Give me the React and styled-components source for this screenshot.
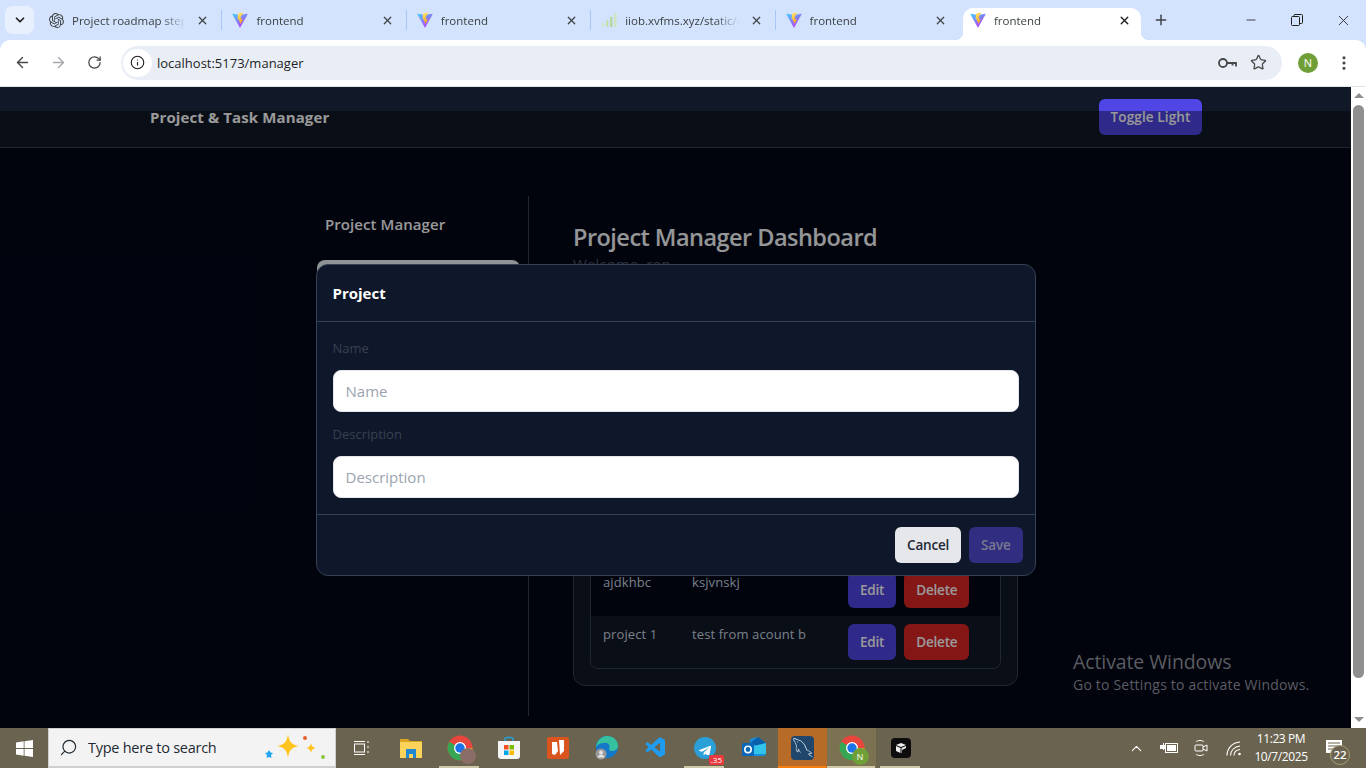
import React from 'react';
import styled, { createGlobalStyle } from 'styled-components';
import {
  ArrowLeft, ArrowRight, RotateCw, Info, Star, MoreVertical, X, Plus, Minus,
  ChevronDown, ChevronUp, Search,
} from 'lucide-react';
import { SiOpenai } from 'react-icons/si';
import { VscVscode } from 'react-icons/vsc';
import { FaTelegramPlane } from 'react-icons/fa';
import { GrMysql } from 'react-icons/gr';

const UI = `"Open Sans", "Noto Sans", "Liberation Sans", sans-serif`;

const GlobalStyle = createGlobalStyle`
  html, body { margin: 0; padding: 0; overflow: hidden; background: #fff; }
  * { box-sizing: border-box; }
  body { font-family: ${UI}; }
`;

const Screen = styled.div`
  position: relative;
  width: 1366px;
  height: 768px;
  display: flex;
  flex-direction: column;
  overflow: hidden;
`;

/* browser chrome */
const TabStrip = styled.div`
  height: 40px;
  flex: none;
  background: #d3e3fd;
  display: flex;
  align-items: flex-end;
  padding-left: 5px;
`;
const TabSearch = styled.div`
  width: 29px;
  height: 28px;
  margin-bottom: 6px;
  margin-right: 4px;
  border-radius: 8px;
  background: #e8f0fe;
  display: flex;
  align-items: center;
  justify-content: center;
  color: #1f1f1f;
`;
const Tab = styled.div`
  position: relative;
  width: ${p => (p.$active ? '178px' : '184.4px')};
  margin-left: ${p => (p.$active ? '3px' : '0')};
  height: 32px;
  display: flex;
  align-items: center;
  padding: 0 ${p => (p.$active ? '7px' : '10px')} 8px ${p => (p.$active ? '7px' : '10px')};
  border-radius: 10px 10px 0 0;
  background: ${p => (p.$active ? '#fff' : 'transparent')};
  font-size: 11.5px;
  color: #3c4043;
  &::after {
    content: '';
    display: ${p => (p.$last || p.$active ? 'none' : 'block')};
    position: absolute;
    right: 0;
    top: 2px;
    width: 1px;
    height: 20px;
    background: #a8c7fa;
  }
  ${p => p.$active && `
    &::before {
      content: '';
      position: absolute;
      left: -8px;
      bottom: 0;
      width: 8px;
      height: 8px;
      background: radial-gradient(circle at 0 0, transparent 8px, #fff 8.5px);
    }
  `}
`;
const TabFlare = styled.span`
  position: absolute;
  right: -8px;
  bottom: 0;
  width: 8px;
  height: 8px;
  background: radial-gradient(circle at 100% 0, transparent 8px, #fff 8.5px);
`;
const TabIcon = styled.span`
  width: 16px;
  height: 16px;
  flex: none;
  display: flex;
  align-items: center;
  justify-content: center;
`;
const TabTitle = styled.span`
  flex: 1;
  margin: 0 10px 0 8px;
  white-space: nowrap;
  overflow: hidden;
  mask-image: linear-gradient(to right, #000 78%, transparent 100%);
`;
const TabClose = styled(X)`
  flex: none;
  margin-right: 3px;
  color: #3c4043;
`;
const NewTab = styled.div`
  width: 24px;
  height: 32px;
  margin-left: 8px;
  padding-bottom: 8px;
  display: flex;
  align-items: center;
  justify-content: center;
  color: #3c4043;
`;
const WindowButtons = styled.div`
  margin-left: auto;
  height: 40px;
  display: flex;
  align-items: center;
  color: #1f1f1f;
`;
const WindowButton = styled.div`
  width: 46px;
  display: flex;
  justify-content: center;
`;
const Toolbar = styled.div`
  height: 47px;
  flex: none;
  background: #d3e3fd;
`;
const ToolbarInner = styled.div`
  height: 47px;
  background: #fff;
  border-radius: 10px 10px 0 0;
  border-bottom: 1px solid #e1e3e6;
  display: flex;
  align-items: center;
  padding: 0 0 1px 12px;
  color: #474747;
`;
const NavButton = styled.div`
  width: 20px;
  margin-right: 16px;
  display: flex;
  justify-content: center;
  color: ${p => (p.$muted ? '#a6a8ab' : '#474747')};
`;
const AddressBar = styled.div`
  width: 1161px;
  height: 34px;
  margin-left: 1px;
  border-radius: 17px;
  background: #e9eef6;
  display: flex;
  align-items: center;
  padding: 0 15px 0 2px;
`;
const InfoBadge = styled.div`
  width: 29px;
  height: 28px;
  border-radius: 14px;
  background: #fff;
  display: flex;
  align-items: center;
  justify-content: center;
  color: #1f1f1f;
`;
const Url = styled.span`
  margin-left: 5px;
  font-size: 13px;
  color: #1f1f1f;
`;
const AddressIcons = styled.div`
  margin-left: auto;
  display: flex;
  align-items: center;
  gap: 13px;
  color: #474747;
`;
const Avatar = styled.div`
  width: 20px;
  height: 20px;
  margin-left: 16px;
  border-radius: 50%;
  background: #6f9f36;
  color: #fff;
  font-size: 11px;
  display: flex;
  align-items: center;
  justify-content: center;
`;
const MoreButton = styled.div`
  margin-left: 17px;
  display: flex;
`;

/* the app in the viewport */
const Viewport = styled.div`
  flex: 1;
  display: flex;
  min-height: 0;
`;
const Page = styled.div`
  position: relative;
  flex: 1;
  background: #020617;
  overflow: hidden;
`;
const Header = styled.header`
  height: 61px;
  background: #111827;
  border-bottom: 1px solid #374151;
  display: flex;
  align-items: center;
  justify-content: space-between;
  padding: 0 149px 0 150px;
`;
const Brand = styled.div`
  font-size: 15px;
  font-weight: 700;
  letter-spacing: 0.11px;
  color: #fff;
`;
const Button = styled.button`
  height: 36px;
  padding: 0 12px;
  border: 0;
  border-radius: 6px;
  background: ${p => p.$bg || '#4f46e5'};
  color: ${p => p.$fg || '#fff'};
  font-family: ${UI};
  font-size: 13.5px;
  font-weight: 600;
  letter-spacing: -0.2px;
  flex: none;
`;
const ToggleButton = styled(Button)`
  padding: 0 11.5px;
  letter-spacing: 0.13px;
`;
const Layout = styled.div`
  width: 720px;
  margin: 48px 0 0 316px;
  display: flex;
`;
const Sidebar = styled.aside`
  width: 213px;
  flex: none;
  padding: 16px 8px 0 1px;
  border-right: 1px solid #374151;
`;
const SideTitle = styled.div`
  padding-left: 8px;
  font-size: 15px;
  line-height: 24px;
  font-weight: 600;
  letter-spacing: 0.07px;
  color: #fff;
`;
const SideItem = styled.div`
  height: 40px;
  margin-top: 24px;
  border-radius: 8px;
  background: #f1f5f9;
`;
const Main = styled.main`
  flex: 1;
  padding: 26px 18px 30px 44px;
`;
const Title = styled.h1`
  margin: 0;
  font-size: 23.5px;
  line-height: 30px;
  font-weight: 600;
  letter-spacing: -0.53px;
  color: #f8fafc;
`;
const Welcome = styled.p`
  margin: 0;
  font-size: 15px;
  line-height: 24px;
  letter-spacing: 0.1px;
  color: #475569;
`;
const Card = styled.section`
  margin-top: 24px;
  padding: 16px;
  border: 1px solid #374151;
  border-radius: 12px;
  background: #111827;
`;
const CardHead = styled.div`
  height: 36px;
  margin-bottom: 16px;
  display: flex;
  align-items: center;
  justify-content: space-between;
  color: #fff;
  font-weight: 600;
`;
const Table = styled.div`
  border: 1px solid #374151;
  border-radius: 8px;
  overflow: hidden;
`;
const Row = styled.div`
  display: grid;
  grid-template-columns: 89px 156px auto;
  height: ${p => (p.$head ? '38px' : '52px')};
  padding: 8px 12px;
  background: ${p => (p.$odd ? '#111827' : '#020617')};
  font-size: 13px;
  line-height: 20px;
  letter-spacing: 0.1px;
  color: #cbd5e1;
`;
const Actions = styled.div`
  display: flex;
  gap: 8px;
`;
const Overlay = styled.div`
  position: absolute;
  left: 0;
  right: 0;
  top: 24px;
  bottom: 0;
  padding-top: 1px;
  background: rgba(0, 0, 0, 0.4);
  display: flex;
  align-items: center;
  justify-content: center;
`;
const Modal = styled.div`
  width: 720px;
  border: 1px solid #334155;
  border-radius: 12px;
  background: #0f172a;
`;
const ModalHead = styled.div`
  height: 57px;
  padding: 0 16px;
  display: flex;
  align-items: center;
  border-bottom: 1px solid #334155;
  font-size: 15px;
  font-weight: 700;
  color: #fff;
`;
const ModalBody = styled.div`
  padding: 16px;
  border-bottom: 1px solid #334155;
`;
const Label = styled.label`
  display: block;
  font-size: 13px;
  line-height: 20px;
  color: #374151;
  margin-bottom: 12px;
`;
const Input = styled.input`
  display: block;
  width: 100%;
  height: 42px;
  margin-bottom: 12px;
  padding: 0 12px;
  border: 1px solid #e5e7eb;
  border-radius: 8px;
  background: #fff;
  font-family: ${UI};
  font-size: 15px;
  &::placeholder { color: #9ca3af; opacity: 1; }
  &:last-child { margin-bottom: 0; }
`;
const ModalFoot = styled.div`
  height: 60px;
  padding: 0 12px;
  display: flex;
  align-items: center;
  justify-content: flex-end;
  gap: 8px;
`;

/* scrollbar */
const Scrollbar = styled.div`
  width: 15px;
  flex: none;
  background: #fff;
  display: flex;
  flex-direction: column;
  align-items: center;
`;
const ScrollArrow = styled.div`
  width: 0;
  height: 0;
  margin: ${p => (p.$down ? '0 0 6px' : '6px 0 0')};
  border-left: 5px solid transparent;
  border-right: 5px solid transparent;
  ${p => (p.$down ? 'border-top: 5px solid #8f8f8f;' : 'border-bottom: 5px solid #8f8f8f;')}
`;
const ScrollThumb = styled.div`
  width: 11px;
  height: 573px;
  margin: 7px 0 auto;
  border-radius: 6px;
  background: #8f8f8f;
`;

/* taskbar */
const Taskbar = styled.div`
  height: 40px;
  flex: none;
  background: #6a634f;
  display: flex;
  align-items: stretch;
`;
const StartButton = styled.div`
  width: 48px;
  display: flex;
  align-items: center;
  justify-content: center;
`;
const SearchBox = styled.div`
  width: 288px;
  margin-right: 1px;
  background: #f3f3f3;
  border: 1px solid #cfcfcf;
  border-bottom-width: 2px;
  display: flex;
  align-items: center;
  padding-left: 10px;
  color: #1f2a33;
  font-size: 14.5px;
`;
const SearchText = styled.span`
  margin-left: 10px;
  letter-spacing: -0.26px;
`;
const Sparkles = styled.svg`
  margin-left: auto;
  margin-right: 9px;
`;
const Tile = styled.div`
  position: relative;
  width: 49px;
  display: flex;
  align-items: center;
  justify-content: center;
  background: ${p => (p.$focus ? '#b66c27' : p.$open ? '#7b7251' : 'transparent')};
  &::after {
    content: '';
    display: ${p => (p.$focus || p.$open || p.$run ? 'block' : 'none')};
    position: absolute;
    bottom: 0;
    left: ${p => (p.$focus || p.$open ? '0' : '4px')};
    right: ${p => (p.$focus || p.$open ? '1px' : '5px')};
    height: 2px;
    background: ${p => (p.$focus ? '#f77f0f' : '#cfc8a8')};
  }
`;
const Badge = styled.span`
  position: absolute;
  right: 5px;
  bottom: 3px;
  padding: 0 2px;
  border-radius: 2px;
  background: #e8393f;
  color: #fff;
  font-size: 8px;
  line-height: 10px;
`;
const Tray = styled.div`
  margin-left: auto;
  display: flex;
  align-items: center;
  color: #fff;
`;
const TrayIcon = styled.div`
  width: 32.5px;
  display: flex;
  justify-content: center;
`;
const Clock = styled.div`
  width: 62px;
  white-space: nowrap;
  text-align: center;
  font-size: 12px;
  line-height: 18px;
  letter-spacing: -0.4px;
`;
const Notify = styled.div`
  position: relative;
  width: 33px;
  height: 40px;
  margin: 0 17px 0 4px;
  padding: 0 0 4px 2px;
  display: flex;
  align-items: center;
  justify-content: center;
`;
const NotifyCount = styled.span`
  position: absolute;
  left: 14px;
  top: 17px;
  width: 20px;
  height: 20px;
  border-radius: 50%;
  background: #6a634f;
  border: 1px solid #a89c73;
  color: #fff;
  font-size: 11.5px;
  font-weight: 600;
  line-height: 18px;
  text-align: center;
`;
const Watermark = styled.div`
  position: absolute;
  left: 1073px;
  top: 649px;
  color: #5c5d62;
  font-size: 14px;
  line-height: 20px;
  letter-spacing: 0.2px;
  pointer-events: none;
`;
const WatermarkTitle = styled.div`
  font-size: 19.5px;
  line-height: 26px;
  letter-spacing: -0.1px;
`;

const ViteIcon = () => (
  <svg width="16" height="16" viewBox="0 0 32 32">
    <defs>
      <linearGradient id="vt" x1="0" y1="0" x2="0.7" y2="1">
        <stop offset="0" stopColor="#41d1ff" />
        <stop offset="1" stopColor="#bd34fe" />
      </linearGradient>
      <linearGradient id="vb" x1="0" y1="0" x2="0.4" y2="1">
        <stop offset="0" stopColor="#ffea83" />
        <stop offset="1" stopColor="#ffa800" />
      </linearGradient>
    </defs>
    <path d="M31 5 17 30a1 1 0 0 1-2 0L1 5c-.4-.7.2-1.5 1-1.4l14 2.5 14-2.5c.8-.1 1.4.7 1 1.4z" fill="url(#vt)" />
    <path d="M22.5 1 12 3l-.7 12 3.300-.7-.9 5 3-.9-1.200 6.500L22 15.500l-3.600.7 1.100-4-3.200.5z" fill="url(#vb)" />
  </svg>
);

const SignalIcon = () => (
  <svg width="16" height="16" viewBox="0 0 16 16">
    <rect x="1" y="11" width="2.500" height="4" fill="#d5e6ca" />
    <rect x="5" y="8" width="2.500" height="7" fill="#c6dfb5" />
    <rect x="9" y="5" width="2.500" height="10" fill="#b7d7a1" />
    <rect x="13" y="1" width="2.500" height="14" fill="#cfe3c2" />
  </svg>
);

const KeyIcon = () => (
  <svg width="19" height="12" viewBox="0 0 19 12" fill="none" stroke="#474747" strokeWidth="1.800">
    <circle cx="5" cy="6" r="4" />
    <path d="M9 6h9v3.500M14.500 6v2.500" />
  </svg>
);

const WindowsLogo = () => (
  <svg width="17" height="17" viewBox="0 0 17 17" fill="#fff">
    <path d="M0 2.500 7.700 1.300v6.800H0zM8.500 1.200 17 0v8.100H8.500zM0 8.900h7.700v6.800L0 14.500zM8.500 8.900H17V17l-8.500-1.200z" />
  </svg>
);

const ChromeLogo = ({ size = 26 }) => (
  <svg width={size} height={size} viewBox="0 0 26 26">
    <circle cx="13" cy="13" r="12.500" fill="#e8453c" />
    <path d="M13 13 2.200 19.200A12.500 12.500 0 0 1 2.200 6.800z" fill="#34a853" />
    <path d="M13 13 2.200 19.200A12.500 12.500 0 0 0 23.800 19.200L13 13z" fill="#34a853" />
    <path d="M13 13h12.500a12.500 12.500 0 0 1-9 12L13 13z" fill="#fbbc05" />
    <circle cx="13" cy="13" r="6" fill="#fff" />
    <circle cx="13" cy="13" r="4.700" fill="#1a73e8" />
  </svg>
);

const Explorer = () => (
  <svg width="22" height="20" viewBox="0 0 22 20">
    <path d="M0 1h8l2 2h12v3H0z" fill="#d9a520" />
    <rect y="4" width="22" height="16" fill="#fbd25a" />
    <path d="M6 11h10v9h-3v-4H9v4H6z" fill="#1f88d0" />
  </svg>
);

const Store = () => (
  <svg width="24" height="24" viewBox="0 0 24 24">
    <path d="M8 6V3.500C8 2 9 1.500 10 1.500h4c1 0 2 .5 2 2V6" fill="none" stroke="#27a0dc" strokeWidth="1.600" />
    <path d="M1 5h22v15a3 3 0 0 1-3 3H4a3 3 0 0 1-3-3z" fill="#f5f5f5" />
    <rect x="7" y="9" width="4.500" height="4.500" fill="#f25022" />
    <rect x="12.500" y="9" width="4.500" height="4.500" fill="#7fba00" />
    <rect x="7" y="14.500" width="4.500" height="4.500" fill="#00a4ef" />
    <rect x="12.500" y="14.500" width="4.500" height="4.500" fill="#ffb900" />
  </svg>
);

const DocApp = () => (
  <svg width="22" height="22" viewBox="0 0 22 22">
    <rect width="22" height="22" rx="2" fill="#d9541e" />
    <path d="M5 5h5l1 9-3 4-3-1zM12 3h5v11l-4 4z" fill="#fff" />
  </svg>
);

const Edge = () => (
  <svg width="24" height="24" viewBox="0 0 24 24">
    <circle cx="12" cy="11" r="11" fill="#1677c9" />
    <path d="M1 11C2 4 7 0 12 0c6 0 11 4 11 10 0 3-3 5-6 5-2 0-3-1-3-2 2-3-1-7-5-6-4 0-7 2-8 4z" fill="#35c1a0" />
    <circle cx="6" cy="18" r="5.500" fill="#9a9a9a" />
    <circle cx="6" cy="16.500" r="2" fill="#e4e4e4" />
    <path d="M2.500 21.500c.5-2 2-3 3.500-3s3 1 3.500 3z" fill="#e4e4e4" />
  </svg>
);

const Telegram = () => (
  <svg width="22" height="22" viewBox="0 0 22 22">
    <circle cx="11" cy="11" r="11" fill="#2a9fd8" />
    <foreignObject x="4" y="4" width="14" height="14">
      <FaTelegramPlane color="#fff" size={14} />
    </foreignObject>
  </svg>
);

const Outlook = () => (
  <svg width="24" height="22" viewBox="0 0 24 22">
    <path d="M8 2l8-2 8 6v10a3 3 0 0 1-3 3H8z" fill="#1490df" />
    <path d="M16 0l8 6-8 3-8-3z" fill="#0a5fa8" />
    <path d="M12 9l12-3v11H12z" fill="#31c3e8" />
    <rect y="6" width="12" height="13" rx="1.500" fill="#0a66b8" />
    <circle cx="6" cy="12.500" r="3.200" fill="none" stroke="#fff" strokeWidth="1.600" />
  </svg>
);

const MysqlTile = styled.div`
  width: 23px;
  height: 24px;
  border-radius: 4px;
  background: #20476b;
  display: flex;
  align-items: center;
  justify-content: center;
  color: #cfe0ee;
`;
const ChromeN = styled.div`
  position: relative;
  width: 26px;
  height: 26px;
`;
const ChromeNBadge = styled.span`
  position: absolute;
  right: -4px;
  bottom: -4px;
  width: 17px;
  height: 17px;
  border-radius: 50%;
  background: #6f9f36;
  color: #dfeacb;
  font-size: 9px;
  font-weight: 600;
  line-height: 17px;
  text-align: center;
`;
const ProfileDot = styled.span`
  position: absolute;
  right: -3px;
  bottom: -3px;
  width: 16px;
  height: 16px;
  border-radius: 50%;
  background: #8a6d66;
`;
const BlackTile = styled.div`
  width: 20px;
  height: 20px;
  border-radius: 4px;
  background: #0d0d0d;
  display: flex;
  align-items: center;
  justify-content: center;
`;

const tabs = [
  { title: 'Project roadmap steps', icon: <SiOpenai size={15} color="#3c4043" /> },
  { title: 'frontend', icon: <ViteIcon /> },
  { title: 'frontend', icon: <ViteIcon /> },
  { title: 'iiob.xvfms.xyz/static/4', icon: <SignalIcon /> },
  { title: 'frontend', icon: <ViteIcon />, last: true },
];

const rows = [
  { name: 'demo', desc: 'first project' },
  { name: 'website', desc: 'landing page' },
  { name: 'mobile', desc: 'app build' },
  { name: 'ajdkhbc', desc: 'ksjvnskj' },
  { name: 'project 1', desc: 'test from acount b' },
];

export default function App() {
  return (
    <Screen>
      <GlobalStyle />
      <TabStrip>
        <TabSearch><ChevronDown size={14} strokeWidth={3} /></TabSearch>
        {tabs.map((t, i) => (
          <Tab key={i} $last={t.last}>
            <TabIcon>{t.icon}</TabIcon>
            <TabTitle>{t.title}</TabTitle>
            <TabClose size={13} strokeWidth={2.2} />
          </Tab>
        ))}
        <Tab $active>
          <TabIcon><ViteIcon /></TabIcon>
          <TabTitle>frontend</TabTitle>
          <TabClose size={13} strokeWidth={2.6} color="#1f1f1f" />
          <TabFlare />
        </Tab>
        <NewTab><Plus size={16} strokeWidth={2.2} /></NewTab>
        <WindowButtons>
          <WindowButton><Minus size={14} strokeWidth={1.4} /></WindowButton>
          <WindowButton>
            <svg width="12" height="12" viewBox="0 0 12 12" fill="none" stroke="#1f1f1f">
              <rect x="0.500" y="2.500" width="8" height="9" rx="1" />
              <path d="M3 2.500V1.500a1 1 0 0 1 1-1h6.500a1 1 0 0 1 1 1V8.500a1 1 0 0 1-1 1H8.500" />
            </svg>
          </WindowButton>
          <WindowButton><X size={17} strokeWidth={1.2} /></WindowButton>
        </WindowButtons>
      </TabStrip>
      <Toolbar>
        <ToolbarInner>
          <NavButton><ArrowLeft size={17} strokeWidth={2} /></NavButton>
          <NavButton $muted><ArrowRight size={17} strokeWidth={2} /></NavButton>
          <NavButton><RotateCw size={15} strokeWidth={2} /></NavButton>
          <AddressBar>
            <InfoBadge><Info size={15} strokeWidth={1.8} /></InfoBadge>
            <Url>localhost:5173/manager</Url>
            <AddressIcons>
              <KeyIcon />
              <Star size={17} strokeWidth={1.8} />
            </AddressIcons>
          </AddressBar>
          <Avatar>N</Avatar>
          <MoreButton><MoreVertical size={18} strokeWidth={2.2} /></MoreButton>
        </ToolbarInner>
      </Toolbar>
      <Viewport>
        <Page>
          <Header>
            <Brand>Project &amp; Task Manager</Brand>
            <ToggleButton>Toggle Light</ToggleButton>
          </Header>
          <Layout>
            <Sidebar>
              <SideTitle>Project Manager</SideTitle>
              <SideItem />
            </Sidebar>
            <Main>
              <Title>Project Manager Dashboard</Title>
              <Welcome>Welcome, ron</Welcome>
              <Card>
                <CardHead>Projects</CardHead>
                <Table>
                  <Row $head $odd><span>Name</span><span>Description</span><span>Actions</span></Row>
                  {rows.map((r, i) => (
                    <Row key={i} $odd={i % 2 === 0}>
                      <span>{r.name}</span>
                      <span>{r.desc}</span>
                      <Actions>
                        <Button>Edit</Button>
                        <Button $bg="#dc2626">Delete</Button>
                      </Actions>
                    </Row>
                  ))}
                </Table>
              </Card>
            </Main>
          </Layout>
          <Overlay>
            <Modal>
              <ModalHead>Project</ModalHead>
              <ModalBody>
                <Label>Name</Label>
                <Input placeholder="Name" />
                <Label>Description</Label>
                <Input placeholder="Description" />
              </ModalBody>
              <ModalFoot>
                <Button $bg="#e5e7eb" $fg="#1f2937">Cancel</Button>
                <Button $bg="#312e81" $fg="#79798f">Save</Button>
              </ModalFoot>
            </Modal>
          </Overlay>
        </Page>
        <Scrollbar>
          <ScrollArrow />
          <ScrollThumb />
          <ScrollArrow $down />
        </Scrollbar>
      </Viewport>
      <Taskbar>
        <StartButton><WindowsLogo /></StartButton>
        <SearchBox>
          <Search size={19} strokeWidth={1.5} transform="scale(-1,1)" />
          <SearchText>Type here to search</SearchText>
          <Sparkles width="62" height="30" viewBox="0 0 62 30">
            <path d="M24 1c1 8 4 11 11 12-7 1-10 4-11 12-1-8-4-11-11-12 7-1 10-4 11-12z" fill="#ffc31f" />
            <path d="M47 10c.5 3 2 4.500 5 5-3 .5-4.500 2-5 5-.5-3-2-4.500-5-5 3-.5 4.500-2 5-5z" fill="#ffc31f" />
            <path d="M5 17l1.500 2.500L9 20l-2 2 .5 3L5 24l-2.500 1 .5-3-2-2 2.500-.5z" fill="#1fa5f0" />
            <circle cx="41" cy="5" r="2" fill="#e8602c" />
            <circle cx="59" cy="24" r="2" fill="#8cc63f" />
          </Sparkles>
        </SearchBox>
        <Tile>
          <svg width="16" height="16" viewBox="0 0 16 16" fill="none" stroke="#fff" strokeWidth="1">
            <rect x="0.500" y="4" width="10" height="8" />
            <path d="M0 1.500h11M0 14.500h11M14 1v2M14 6v2M14 11v2" />
          </svg>
        </Tile>
        <Tile><Explorer /></Tile>
        <Tile $run>
          <ChromeN><ChromeLogo /><ProfileDot /></ChromeN>
        </Tile>
        <Tile><Store /></Tile>
        <Tile><DocApp /></Tile>
        <Tile><Edge /></Tile>
        <Tile><VscVscode size={24} color="#1f9cf0" /></Tile>
        <Tile $run><Telegram /><Badge>.35</Badge></Tile>
        <Tile><Outlook /></Tile>
        <Tile $focus><MysqlTile><GrMysql size={20} /></MysqlTile></Tile>
        <Tile $open>
          <ChromeN><ChromeLogo /><ChromeNBadge>N</ChromeNBadge></ChromeN>
        </Tile>
        <Tile $run>
          <BlackTile>
            <svg width="12" height="12" viewBox="0 0 12 12" fill="#eee">
              <path d="M1 3l5-2 5 2-5 2zM1 4l4.500 2v5L1 9zM11 4v2L7 8v3l-.5.200V6z" />
            </svg>
          </BlackTile>
        </Tile>
        <Tray>
          <TrayIcon><ChevronUp size={17} strokeWidth={1.5} /></TrayIcon>
          <TrayIcon>
            <svg width="18" height="12" viewBox="0 0 18 12" fill="#fff">
              <path d="M0 3h3V1h1v2h1v4H4v1H3V7H0z" />
              <rect x="5.500" y="1.500" width="12" height="9" fill="none" stroke="#fff" />
              <rect x="7" y="3" width="9" height="6" />
            </svg>
          </TrayIcon>
          <TrayIcon>
            <svg width="14" height="18" viewBox="0 0 14 18" fill="none" stroke="#fff">
              <path d="M2 3c1-2 7-2 8 0M2 15c1 2 7 2 8 0" />
              <rect x="1" y="6" width="8" height="6" rx="1" />
              <path d="M9 8l4-2v6l-4-2" />
            </svg>
          </TrayIcon>
          <TrayIcon>
            <svg width="16" height="15" viewBox="0 0 16 15" fill="none" stroke="#fff" strokeWidth="1.100">
              <path d="M1 14.500C1 7.500 6 1.500 14 1M4.500 14.500C4.500 10 8 5.500 14 5M8 14.500c0-3 2-5.500 6-6" />
              <circle cx="13.500" cy="13" r="1.300" fill="#fff" stroke="none" />
            </svg>
          </TrayIcon>
          <Clock>11:23 PM<br />10/7/2025</Clock>
          <Notify>
            <svg width="16" height="13" viewBox="0 0 16 13">
              <rect width="16" height="13" fill="#fff" />
              <path d="M2 3h12M2 6h12M2 9h8" stroke="#6a634f" />
            </svg>
            <NotifyCount>22</NotifyCount>
          </Notify>
        </Tray>
      </Taskbar>
      <Watermark>
        <WatermarkTitle>Activate Windows</WatermarkTitle>
        Go to Settings to activate Windows.
      </Watermark>
    </Screen>
  );
}
